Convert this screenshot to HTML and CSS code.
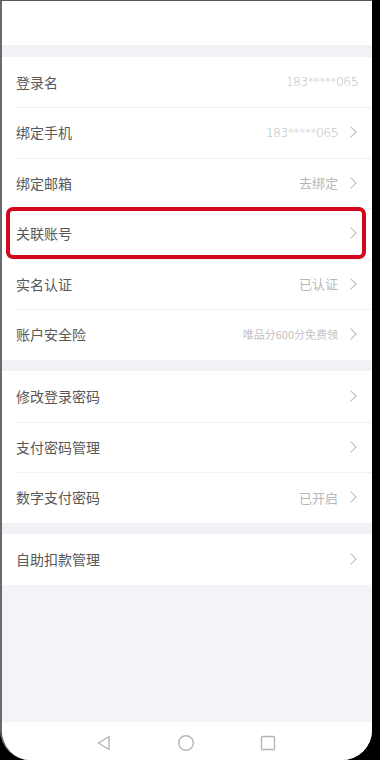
FILE: index.html
```html
<!DOCTYPE html>
<html lang="zh-CN">
<head>
<meta charset="utf-8">
<title>账户设置</title>
<link rel="stylesheet" href="styles.css">
</head>
<body>
<div class="screen">
  <div class="topbar"></div>
  <div class="gap"></div>
  <div class="group">
    <div class="row"><span class="label">登录名</span><span class="value num">183*****065</span></div>
    <div class="row"><span class="label">绑定手机</span><span class="value num">183*****065</span><span class="chev"></span></div>
    <div class="row"><span class="label">绑定邮箱</span><span class="value">去绑定</span><span class="chev"></span></div>
    <div class="row highlight"><span class="label">关联账号</span><span class="chev"></span><span class="mark"></span></div>
    <div class="row"><span class="label">实名认证</span><span class="value">已认证</span><span class="chev"></span></div>
    <div class="row"><span class="label">账户安全险</span><span class="value small">唯品分600分免费领</span><span class="chev"></span></div>
  </div>
  <div class="gap"></div>
  <div class="group">
    <div class="row"><span class="label">修改登录密码</span><span class="chev"></span></div>
    <div class="row"><span class="label">支付密码管理</span><span class="chev"></span></div>
    <div class="row"><span class="label">数字支付密码</span><span class="value">已开启</span><span class="chev"></span></div>
  </div>
  <div class="gap"></div>
  <div class="group">
    <div class="row"><span class="label">自助扣款管理</span><span class="chev"></span></div>
  </div>
  <div class="fill"></div>
  <div class="navbar">
    <svg class="nav-icon" width="16" height="16" viewBox="0 0 16 16"><path d="M13 1.5 L2.5 8 L13 14.5 Z" fill="none" stroke="#b4b4b4" stroke-width="1.4" stroke-linejoin="round"/></svg>
    <svg class="nav-icon" width="18" height="18" viewBox="0 0 18 18"><circle cx="9" cy="9" r="7.3" fill="none" stroke="#b4b4b4" stroke-width="1.4"/></svg>
    <svg class="nav-icon" width="16" height="16" viewBox="0 0 16 16"><rect x="1.5" y="1.5" width="13" height="13" rx="1" fill="none" stroke="#b4b4b4" stroke-width="1.4"/></svg>
  </div>
</div>
</body>
</html>
```
FILE: styles.css
```css
html, body {
  margin: 0;
  padding: 0;
  background: #000;
}
body {
  width: 380px;
  height: 760px;
  overflow: hidden;
  font-family: "Noto Sans CJK SC", "Noto Sans", sans-serif;
}
.screen {
  width: 370px;
  height: 759px;
  border-left: 2px solid #6a6a6a;
  border-top: 1px solid #555;
  border-bottom-left-radius: 30px;
  border-bottom-right-radius: 30px;
  overflow: hidden;
  background: #f4f3f7;
  display: flex;
  flex-direction: column;
}
.topbar {
  height: 44px;
  background: #fff;
  flex: none;
}
.gap {
  height: 11.5px;
  background: #f2f1f5;
  flex: none;
}
.group {
  background: #fff;
  flex: none;
}
.row {
  position: relative;
  height: 50.5px;
  display: flex;
  align-items: center;
  padding: 0 14px 0 14px;
  box-sizing: border-box;
}
.row + .row::before {
  content: "";
  position: absolute;
  top: 0;
  left: 14px;
  right: 0;
  height: 1px;
  background: #f1f1f3;
}
.label {
  font-size: 14px;
  color: #585858;
  flex: 1;
}
.value {
  font-size: 13px;
  color: #b8b8b8;
}
.value.num {
  font-family: "DejaVu Sans", sans-serif;
  font-weight: 300;
  font-size: 12.5px;
  letter-spacing: -0.6px;
  color: #bdbdbd;
}
.value.small {
  font-size: 11px;
  color: #c2c2c2;
}
.chev {
  width: 7px;
  height: 7px;
  border-top: 1.3px solid #bcbcbc;
  border-right: 1.3px solid #bcbcbc;
  transform: rotate(45deg);
  margin-left: 9px;
  margin-right: 3px;
}
.mark {
  position: absolute;
  top: -1.5px;
  left: 4px;
  right: 6px;
  bottom: -0.5px;
  border: 4px solid #d3071d;
  border-radius: 7px;
}
.fill {
  flex: 1;
  background: #f4f3f7;
}
.navbar {
  height: 38px;
  flex: none;
  background: #fff;
  display: flex;
  align-items: center;
  justify-content: center;
  gap: 65px;
  padding-right: 2px;
  padding-top: 4px;
  box-sizing: border-box;
}
.nav-icon {
  display: block;
}
```
